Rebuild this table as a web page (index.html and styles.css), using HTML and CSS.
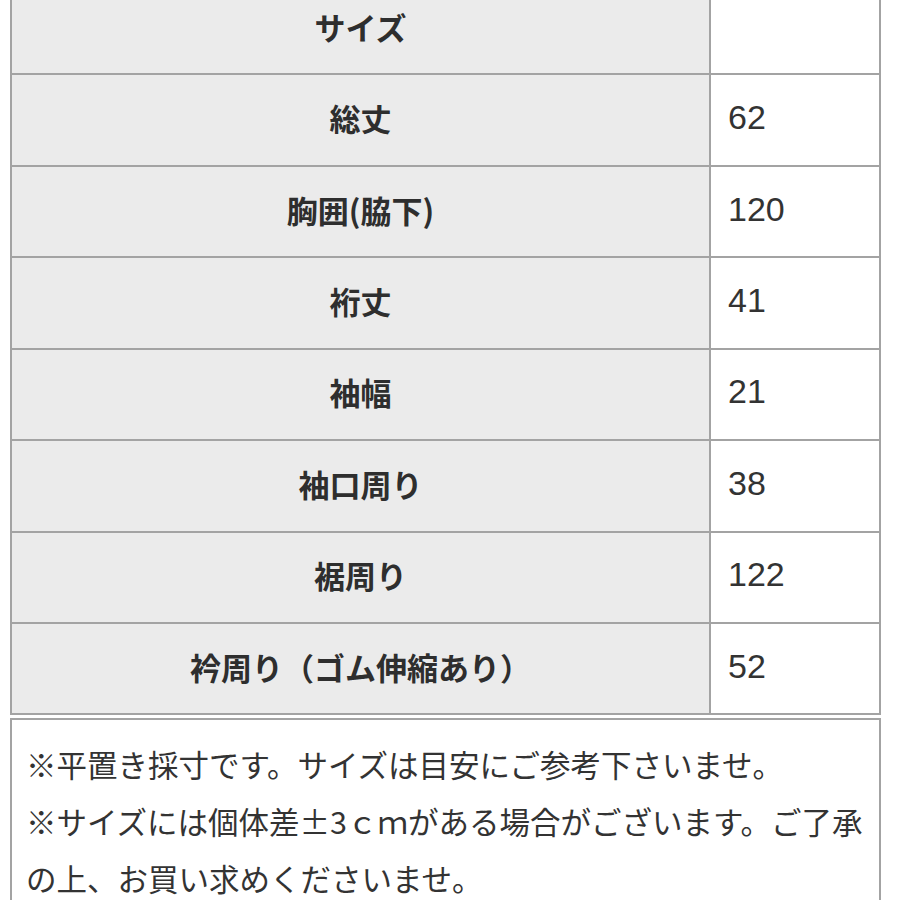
FILE: index.html
```html
<!DOCTYPE html>
<html lang="ja">
<head>
<meta charset="utf-8">
<title>サイズ</title>
<link rel="stylesheet" href="styles.css">
</head>
<body>
<table class="size-table">
  <tbody>
    <tr><th class="label">サイズ</th><td class="value"></td></tr>
    <tr><th class="label">総丈</th><td class="value">62</td></tr>
    <tr><th class="label">胸囲(脇下)</th><td class="value">120</td></tr>
    <tr><th class="label">裄丈</th><td class="value">41</td></tr>
    <tr><th class="label">袖幅</th><td class="value">21</td></tr>
    <tr><th class="label">袖口周り</th><td class="value">38</td></tr>
    <tr><th class="label">裾周り</th><td class="value">122</td></tr>
    <tr><th class="label">衿周り（ゴム伸縮あり）</th><td class="value">52</td></tr>
  </tbody>
</table>
<div class="notes">
  <p class="note">※平置き採寸です。サイズは目安にご参考下さいませ。</p>
  <p class="note">※サイズには個体差±3ｃｍがある場合がございます。ご了承の上、お買い求めくださいませ。</p>
</div>
</body>
</html>
```

FILE: styles.css
```css
html, body {
  margin: 0;
  padding: 0;
  background: #ffffff;
}

body {
  color: #333333;
  font-family: "Noto Sans CJK JP", "Noto Sans", sans-serif;
  overflow: hidden;
}

.size-table {
  border-collapse: separate;
  border-spacing: 0;
  border-top: 2px solid #a3a3a3;
  border-left: 2px solid #a3a3a3;
  margin: -18px 0 0 10px;
  width: 871px;
  table-layout: fixed;
}

.size-table th,
.size-table td {
  box-sizing: border-box;
  height: 91.43px;
  border-right: 2px solid #a3a3a3;
  border-bottom: 2px solid #a3a3a3;
  padding: 0 0 5px 0;
  vertical-align: middle;
}

.label {
  width: 699px;
  background: #ebebeb;
  font-size: 31px;
  font-weight: 700;
  text-align: center;
  color: #2e2e2e;
}

.size-table .value {
  width: 170px;
  background: #ffffff;
  padding-left: 17px;
  font-family: "Liberation Sans", "Noto Sans CJK JP", sans-serif;
  font-size: 34px;
  font-weight: 400;
  text-align: left;
}

.notes {
  margin: 3px 0 0 10px;
  width: 871px;
  box-sizing: border-box;
  border: 2px solid #a3a3a3;
  padding: 16px 10px 20px 14px;
}

.note {
  margin: 0;
  font-size: 30.5px;
  line-height: 57px;
  color: #333333;
}
```
